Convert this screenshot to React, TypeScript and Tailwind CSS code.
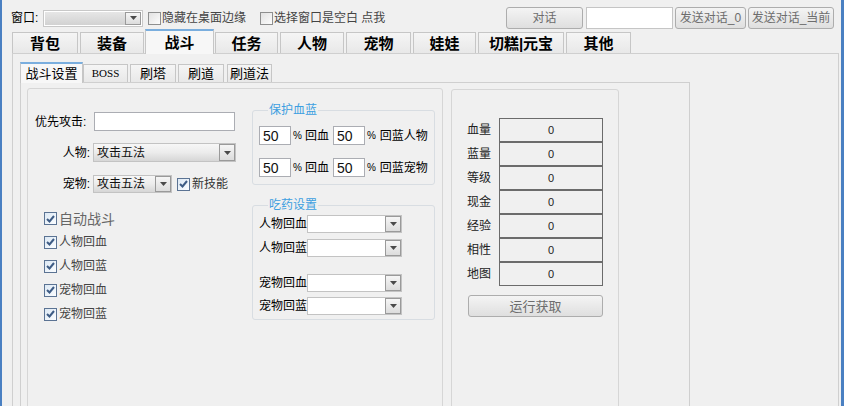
function DropBtn() {
  return (
    <span className="flex h-full w-[16px] shrink-0 items-center justify-center border border-[#9a9a9a] bg-linear-to-b from-[#f6f6f6] to-[#dcdcdc]">
      <svg width="7" height="4" viewBox="0 0 7 4">
        <path d="M0 0h7L3.5 4z" fill="#4a4a4a" />
      </svg>
    </span>
  );
}

function Check({ checked = false }: { checked?: boolean }) {
  return (
    <span
      className={
        checked
          ? "flex h-[13px] w-[13px] shrink-0 items-center justify-center border border-[#5b7393] bg-linear-to-br from-[#dce8f4] to-[#fbfdff]"
          : "flex h-[13px] w-[13px] shrink-0 items-center justify-center border border-[#8e8f8f] bg-linear-to-br from-[#e2e2e2] to-[#fcfcfc]"
      }
    >
      {checked && (
        <svg width="9" height="8" viewBox="0 0 9 8">
          <path d="M1 4l2.5 2.5L8 1" fill="none" stroke="#3e5c85" strokeWidth="2" />
        </svg>
      )}
    </span>
  );
}

function Select({ className, text }: { className: string; text?: string }) {
  return (
    <div className={"flex border border-[#c3c3c3] bg-white " + className}>
      <div
        className={
          text
            ? "flex flex-1 items-center bg-linear-to-b from-[#f7f7f7] via-[#ececec] to-[#d6d6d6] pl-[3px] text-[12px] leading-none text-[#111]"
            : "flex-1"
        }
      >
        {text}
      </div>
      <DropBtn />
    </div>
  );
}

function Btn({ className, label }: { className: string; label: string }) {
  return (
    <div
      className={
        "flex items-center justify-center rounded-[3px] border border-[#adadad] bg-linear-to-b from-[#f4f4f4] to-[#dfdfdf] text-[12px] leading-none text-[#6d6d6d] " +
        className
      }
    >
      {label}
    </div>
  );
}

function PctInput() {
  return (
    <div className="flex h-[19px] w-[32px] items-center border border-[#abadb3] bg-white pl-[3px] text-[14px] leading-none text-[#111]">
      50
    </div>
  );
}

export default function App() {
  const stats = ["血量", "蓝量", "等级", "现金", "经验", "相性", "地图"];
  const checks = ["人物回血", "人物回蓝", "宠物回血", "宠物回蓝"];

  return (
    <div className="h-[406px] w-[844px] overflow-hidden border-l-2 border-r-[3px] border-[#4a80c2] bg-[#f0f0f0] font-['Liberation_Sans','Noto_Sans_CJK_SC',sans-serif] text-[12px] text-black">
      {/* top bar */}
      <div className="mt-[7px] flex h-[22px] items-center">
        <span className="ml-[9px] w-[32px] leading-none">窗口:</span>
        <div className="flex h-[17px] w-[100px] border border-[#c8c8c8] bg-white p-px">
          <div className="flex-1 bg-linear-to-b from-[#e6e6e6] to-[#d2d2d2]" />
          <DropBtn />
        </div>
        <span className="ml-[5px]">
          <Check />
        </span>
        <span className="ml-px leading-none text-[#444]">隐藏在桌面边缘</span>
        <span className="ml-[14px]">
          <Check />
        </span>
        <span className="ml-px leading-none text-[#444]">选择窗口是空白 点我</span>
        <div className="ml-auto mr-[7px] flex h-[22px] items-center">
          <Btn className="h-[22px] w-[77px]" label="对话" />
          <div className="ml-[3px] h-[22px] w-[87px] border border-[#c5c5c5] bg-white" />
          <Btn className="ml-[2px] h-[22px] w-[71px]" label="发送对话_0" />
          <Btn className="ml-[2px] h-[22px] w-[86px]" label="发送对话_当前" />
        </div>
      </div>

      {/* main tabs */}
      <div className="ml-[10px] flex h-[24px] items-end text-[15px] font-bold leading-none">
        <div className="flex h-[21px] w-[66px] items-center justify-center border border-b-0 border-[#c6c6c6] bg-linear-to-b from-[#f5f5f5] to-[#e8e8e8]">背包</div>
        <div className="ml-[2px] flex h-[21px] w-[64px] items-center justify-center border border-b-0 border-[#c6c6c6] bg-linear-to-b from-[#f5f5f5] to-[#e8e8e8]">装备</div>
        <div className="relative z-10 -mb-px ml-px flex h-[25px] w-[69px] items-center justify-center border border-b-0 border-[#c6c6c6] border-t-2 border-t-[#7aaede] bg-[#f7f7f7]">战斗</div>
        <div className="ml-px flex h-[21px] w-[63px] items-center justify-center border border-b-0 border-[#c6c6c6] bg-linear-to-b from-[#f5f5f5] to-[#e8e8e8]">任务</div>
        <div className="ml-[2px] flex h-[21px] w-[64px] items-center justify-center border border-b-0 border-[#c6c6c6] bg-linear-to-b from-[#f5f5f5] to-[#e8e8e8]">人物</div>
        <div className="ml-[2px] flex h-[21px] w-[65px] items-center justify-center border border-b-0 border-[#c6c6c6] bg-linear-to-b from-[#f5f5f5] to-[#e8e8e8]">宠物</div>
        <div className="ml-[2px] flex h-[21px] w-[63px] items-center justify-center border border-b-0 border-[#c6c6c6] bg-linear-to-b from-[#f5f5f5] to-[#e8e8e8]">娃娃</div>
        <div className="ml-[2px] flex h-[21px] w-[86px] items-center justify-center border border-b-0 border-[#c6c6c6] bg-linear-to-b from-[#f5f5f5] to-[#e8e8e8]">切糕|元宝</div>
        <div className="ml-[2px] flex h-[21px] w-[65px] items-center justify-center border border-b-0 border-[#c6c6c6] bg-linear-to-b from-[#f5f5f5] to-[#e8e8e8]">其他</div>
      </div>

      {/* tab panel */}
      <div className="ml-[10px] mr-[2px] h-[400px] border border-[#cfcfcf] pl-[7px] pt-[8px]">
        {/* sub tabs */}
        <div className="flex h-[20px] items-end text-[13px] leading-none">
          <div className="relative z-10 -mb-px flex h-[21px] w-[63px] items-center justify-center border border-b-0 border-[#c6c6c6] border-t-2 border-t-[#7aaede] bg-[#f7f7f7]">战斗设置</div>
          <div className="flex h-[18px] w-[45px] items-center justify-center border border-b-0 border-[#c6c6c6] bg-linear-to-b from-[#f5f5f5] to-[#e8e8e8] font-['Liberation_Serif',serif] text-[11px]">BOSS</div>
          <div className="ml-[2px] flex h-[18px] w-[46px] items-center justify-center border border-b-0 border-[#c6c6c6] bg-linear-to-b from-[#f5f5f5] to-[#e8e8e8]">刷塔</div>
          <div className="ml-[2px] flex h-[18px] w-[46px] items-center justify-center border border-b-0 border-[#c6c6c6] bg-linear-to-b from-[#f5f5f5] to-[#e8e8e8]">刷道</div>
          <div className="ml-[3px] flex h-[18px] w-[45px] items-center justify-center border border-b-0 border-[#c6c6c6] bg-linear-to-b from-[#f5f5f5] to-[#e8e8e8]">刷道法</div>
        </div>

        <div className="flex h-[400px] w-[670px] gap-[8px] border border-[#cfcfcf] pl-[6px] pt-[5px]">
          {/* left box */}
          <div className="flex h-[400px] w-[416px] rounded-[3px] border border-[#d6d6d6]">
            <div className="flex w-[224px] flex-col">
              <div className="mt-[23px] flex h-[19px] items-center">
                <span className="ml-[7px] w-[59px] leading-none">优先攻击:</span>
                <div className="h-[19px] w-[141px] border border-[#abadb3] bg-white" />
              </div>
              <div className="mt-[12px] flex h-[19px] items-center">
                <span className="w-[65px] pr-[3px] text-right leading-none">人物:</span>
                <Select className="h-[19px] w-[143px]" text="攻击五法" />
              </div>
              <div className="mt-[13px] flex h-[18px] items-center">
                <span className="w-[65px] pr-[3px] text-right leading-none">宠物:</span>
                <Select className="h-[18px] w-[79px]" text="攻击五法" />
                <span className="ml-[5px]">
                  <Check checked />
                </span>
                <span className="ml-[2px] leading-none text-[#333]">新技能</span>
              </div>
              <div className="ml-[16px] mt-[14px] flex flex-col">
                <div className="flex h-[23px] items-center gap-[2px]">
                  <Check checked />
                  <span className="text-[14px] leading-none text-[#666]">自动战斗</span>
                </div>
                {checks.map((c) => (
                  <div key={c} className="flex h-[24px] items-center gap-[2px]">
                    <Check checked />
                    <span className="leading-none text-[#444]">{c}</span>
                  </div>
                ))}
              </div>
            </div>

            <div className="w-[183px]">
              <fieldset className="mt-[14px] rounded-[3px] border border-[#d8dde2] pb-[7px] pl-[6px]">
                <legend className="ml-[9px] px-px text-[12px] leading-[14px] text-[#3d9fe0]">保护血蓝</legend>
                <div className="mt-[9px] flex h-[19px] items-center">
                  <PctInput />
                  <span className="ml-[2px] text-[10px] leading-none">%</span>
                  <span className="ml-[3px] leading-none">回血</span>
                  <span className="ml-[4px]">
                    <PctInput />
                  </span>
                  <span className="ml-[2px] text-[10px] leading-none">%</span>
                  <span className="ml-[4px] leading-none">回蓝人物</span>
                </div>
                <div className="mt-[13px] flex h-[19px] items-center">
                  <PctInput />
                  <span className="ml-[2px] text-[10px] leading-none">%</span>
                  <span className="ml-[3px] leading-none">回血</span>
                  <span className="ml-[4px]">
                    <PctInput />
                  </span>
                  <span className="ml-[2px] text-[10px] leading-none">%</span>
                  <span className="ml-[4px] leading-none">回蓝宠物</span>
                </div>
              </fieldset>

              <fieldset className="mt-[13px] rounded-[3px] border border-[#d8dde2] pb-[4px] pl-[6px]">
                <legend className="ml-[9px] px-px text-[12px] leading-[14px] text-[#3d9fe0]">吃药设置</legend>
                <div className="mt-[3px] flex h-[18px] items-center">
                  <span className="w-[48px] leading-none">人物回血</span>
                  <Select className="h-[18px] w-[95px]" />
                </div>
                <div className="mt-[6px] flex h-[18px] items-center">
                  <span className="w-[48px] leading-none">人物回蓝</span>
                  <Select className="h-[18px] w-[95px]" />
                </div>
                <div className="mt-[17px] flex h-[18px] items-center">
                  <span className="w-[48px] leading-none">宠物回血</span>
                  <Select className="h-[18px] w-[95px]" />
                </div>
                <div className="mt-[5px] flex h-[18px] items-center">
                  <span className="w-[48px] leading-none">宠物回蓝</span>
                  <Select className="h-[18px] w-[95px]" />
                </div>
              </fieldset>
            </div>
          </div>

          {/* right stats panel */}
          <div className="mt-px h-[400px] w-[168px] rounded-[3px] border border-[#d6d6d6]">
            <div className="mt-[28px] flex flex-col">
              {stats.map((s) => (
                <div key={s} className="flex h-[24px] items-center">
                  <span className="ml-[15px] w-[32px] leading-none text-[#222]">{s}</span>
                  <div className="flex h-[24px] w-[104px] items-center justify-center border border-[#6b6b6b] text-[11px] leading-none text-[#222]">
                    0
                  </div>
                </div>
              ))}
            </div>
            <Btn className="ml-[16px] mt-[9px] h-[22px] w-[135px] text-[13px]" label="运行获取" />
          </div>
        </div>
      </div>
    </div>
  );
}
